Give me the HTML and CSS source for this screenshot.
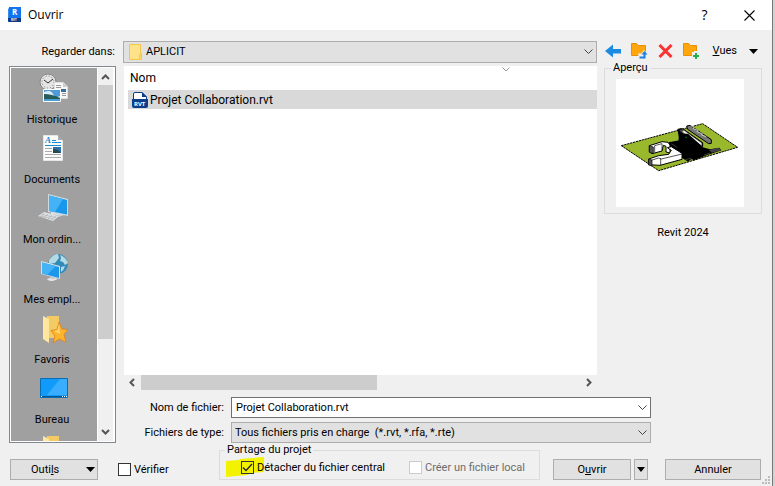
FILE: index.html
```html
<!DOCTYPE html>
<html lang="fr">
<head>
    <meta charset="UTF-8">
    <meta name="viewport" content="width=device-width, initial-scale=1.0">
    <title>Ouvrir</title>
    <link rel="stylesheet" href="styles.css">
</head>
<body>
    <div class="dialog">
        <header class="title-bar">
            <svg class="app-icon" width="16" height="16" viewBox="0 0 16 16">
                <path d="M1 2l2-2v14l-2 1z" fill="#3d8be8"/>
                <path d="M2 0h12v11H2z" fill="#1273f0"/>
                <path d="M1 11h13v4H2q-1 0-1-1z" fill="#0b3a86"/>
                <text x="5" y="8" class="app-letter">R</text>
                <text x="4" y="14" class="app-tag">RVT</text>
            </svg>
            <h1>Ouvrir</h1>
            <button class="title-button help" aria-label="Aide">?</button>
            <button class="title-button" aria-label="Fermer">
                <svg width="11" height="11" viewBox="0 0 11 11"><path d="M.5.5l10 10M10.500.5l-10 10" fill="none" stroke="#000" stroke-width="1.100"/></svg>
            </button>
        </header>

        <div class="look-in">
            <label for="folder">Regarder dans:</label>
            <div class="combo folder-combo">
                <svg class="combo-icon" width="14" height="16" viewBox="0 0 14 16">
                    <path d="M.5.5h11v9h1v6H.5z" fill="#ffe28a" stroke="#f2c744"/>
                    <path d="M10.500 15.500v-5h2v5" fill="#ffd968" stroke="#f2c744"/>
                </svg>
                <select id="folder"><option>APLICIT</option></select>
                <svg class="chevron" width="9" height="6" viewBox="0 0 9 6"><path d="M.5.5l4 4 4-4"/></svg>
            </div>
            <div class="toolbar">
                <button aria-label="Retour">
                    <svg width="16" height="14" viewBox="0 0 16 14"><path d="M0 7l8-6.500V5h8v4.500H8v4z" fill="#1a8be0"/></svg>
                </button>
                <button aria-label="Dossier parent">
                    <svg width="17" height="16" viewBox="0 0 17 16">
                        <path d="M.5 12.500V.5h5l2 2h7v10z" fill="#ffa60d" stroke="#e99000"/>
                        <path d="M7 10.500h3.500L13 7l4 4.500V16H8z" fill="#efefef"/>
                        <path d="M8.500 14.500h5V10" fill="none" stroke="#1a80d8" stroke-width="2"/>
                        <path d="M10.500 11.500l3-3.500 3 3.500z" fill="#1a80d8"/>
                    </svg>
                </button>
                <button aria-label="Supprimer">
                    <svg width="15" height="14" viewBox="0 0 15 14"><path d="M1.500 1l12 12M13.500 1l-12 12" fill="none" stroke="#fa3232" stroke-width="3"/></svg>
                </button>
                <button aria-label="Nouveau dossier">
                    <svg width="17" height="16" viewBox="0 0 17 16">
                        <path d="M.5 12.500V.5h5l2 2h6v10z" fill="#ffa60d" stroke="#e99000"/>
                        <path d="M9 9h2V8h5v8h-5v-1H9z" fill="#efefef"/>
                        <path d="M10 13h6M13 10v6" stroke="#22b14c" stroke-width="2"/>
                    </svg>
                </button>
                <button class="views"><span><u>V</u>ues</span>
                    <svg width="9" height="5" viewBox="0 0 9 5"><path d="M0 0h9L4.500 5z"/></svg>
                </button>
            </div>
        </div>

        <main class="browser">
            <nav class="places">
                <ul class="place-list">
                    <li>
                        <svg width="32" height="32" viewBox="0 0 32 32">
                            <circle cx="12" cy="10" r="8" fill="#e4e4e4" stroke="#858585"/>
                            <circle cx="12" cy="10" r="6" fill="none" stroke="#777" stroke-dasharray="1 2.140"/>
                            <path d="M8 8l4 3 5-4" fill="none" stroke="#333"/>
                            <path d="M18.500 10.500h9l4 4v12h-13z" fill="#f8f8f8" stroke="#ddd"/>
                            <path d="M27 10v5h5" fill="#ccc"/>
                            <path d="M20 13.500h5M20 15.500h5M20 18.500h4M26 21.500h4M26 23.500h4" stroke="#999"/>
                            <path d="M25 17h5v3h-5z" fill="#356da0"/>
                            <path d="M7.500 17.500h17v12h-17z" fill="#4f9bd8" stroke="#fff"/>
                            <path d="M8 20q7-3 9 2t7 2v2H8z" fill="#d9eefa"/>
                            <path d="M8 22q8 0 16 4v3H8z" fill="#285c58"/>
                            <path d="M8 27h16v2H8z" fill="#489fd0"/>
                        </svg>
                        <span>Historique</span>
                    </li>
                    <li>
                        <svg width="32" height="32" viewBox="0 0 32 32">
                            <path d="M7.500 3.500h14l5 5v20h-19z" fill="#fcfcfc" stroke="#e6e6e6"/>
                            <path d="M22 3v5h5z" fill="#aaa"/>
                            <text x="9" y="11" class="doc-letter">A</text>
                            <path d="M16 8.500h4M16 10.500h9M9 13.500h16" stroke="#188bd2"/>
                            <path d="M9 16.500h7M9 19.500h7M9 22.500h16M9 25.500h16" stroke="#aaa"/>
                            <path d="M17 15h8v6h-8z" fill="#2872ac"/>
                            <path d="M17 17q5 0 8 4h-8z" fill="#284950"/>
                        </svg>
                        <span>Documents</span>
                    </li>
                    <li>
                        <svg width="32" height="32" viewBox="0 0 32 32">
                            <path d="M15 20l8-1 5 2v2l-9 2-4-2z" fill="#e3e5e6"/>
                            <path d="M12 2l20 5v17l-20-4z" fill="#cfdbe0"/>
                            <path d="M13 3.500l18 4.500v14.500L13 19z" fill="#1997eb"/>
                            <path d="M13 3.500l14 3.500-8 13-6-1z" fill="#43b2f7"/>
                            <path d="M2 24l6-4 15 4-6 5z" fill="#dfe2e4"/>
                            <path d="M4 24l14 3M6 22.500l14 3M8 21l-3 4M12 22l-4 4M16 23l-4 4M20 24l-5 4" stroke="#9da3a6" stroke-width=".5"/>
                            <path d="M16 22l11 1-4 2z" fill="#c7cfd3"/>
                        </svg>
                        <span>Mon ordin...</span>
                    </li>
                    <li>
                        <svg width="32" height="32" viewBox="0 0 32 32">
                            <circle cx="22" cy="12" r="10" fill="#348ab7"/>
                            <path d="M13 8q4-6 9-6l1 4-4 5-6 1zM24 3q6 2 8 8l-3 2-2-3-3-1 1-3zM25 15l4-1q-1 4-4 6z" fill="#b4dae4"/>
                            <path d="M11 27l5-2 6 2-5 2q-5 0-6-2z" fill="#e1e3e4"/>
                            <path d="M15 22h3v5h-3z" fill="#c4c9cc"/>
                            <path d="M5 9l19 5v13L5 22z" fill="#d4dee3"/>
                            <path d="M6 10.500l17 4.500v11L6 21.500z" fill="#1b96ea"/>
                            <path d="M6 10.500L20 14l-9 9-5-1.500z" fill="#43b2f7"/>
                        </svg>
                        <span>Mes empl...</span>
                    </li>
                    <li>
                        <svg width="32" height="32" viewBox="0 0 32 32">
                            <path d="M11 4h12v22H11z" fill="#f2cc63"/>
                            <path d="M7 4l6 3v24l-6-4z" fill="#ffe7a0"/>
                            <path d="M23 10l3 7 6 .5-4 5 2 8-6.500-3.500L17 31l2-7-4-5.500 6-1z" fill="#fbb52e" stroke="#e77b1a" stroke-width=".8"/>
                            <path d="M23 12l1 10-6-3 3.500-1z" fill="#ffd66b"/>
                        </svg>
                        <span>Favoris</span>
                    </li>
                    <li>
                        <svg width="32" height="32" viewBox="0 0 32 32">
                            <path d="M4.500 6.500h27v19h-27z" fill="#109bfb" stroke="#086db2"/>
                            <path d="M24 7h7v16H11z" fill="#39adff"/>
                            <path d="M5 24h26v1H5z" fill="#07568e"/>
                            <path d="M5 24.500h1M26 24.500h1M28 24.500h1M30 24.500h1" stroke="#fff"/>
                        </svg>
                        <span>Bureau</span>
                    </li>
                    <li>
                        <svg width="32" height="32" viewBox="0 0 32 32">
                            <path d="M11 4h12v22H11z" fill="#f2cc63"/>
                            <path d="M7 4l6 3v24l-6-4z" fill="#ffe7a0"/>
                        </svg>
                    </li>
                </ul>
                <div class="scroll-v">
                    <svg width="9" height="6" viewBox="0 0 9 6"><path d="M1 5l3.500-3.500L8 5"/></svg>
                    <div class="thumb"></div>
                    <svg width="9" height="6" viewBox="0 0 9 6"><path d="M1 1l3.500 3.500L8 1"/></svg>
                </div>
            </nav>

            <div class="content">
                <div class="panes">
                    <div class="files">
                        <div class="file-pane">
                            <svg class="sort-mark" width="8" height="5" viewBox="0 0 8 5"><path d="M.5.5L4 4 7.500.5" fill="none" stroke="#999"/></svg>
                            <table class="file-table">
                                <thead>
                                    <tr><th>Nom</th></tr>
                                </thead>
                                <tbody>
                                    <tr>
                                        <td>
                                            <div class="file">
                                                <svg width="16" height="16" viewBox="0 0 16 16">
                                                    <path d="M1.500 8V2q0-1.500 1.500-1.500h7L14.500 5v4" fill="#fff" stroke="#0d3e8c"/>
                                                    <path d="M10 0v5h5z" fill="#0d3e8c"/>
                                                    <path d="M0 7h16v7q0 2-2 2H2q-2 0-2-2z" fill="#0d3e8c"/>
                                                    <text x="2" y="14" class="file-tag">RVT</text>
                                                </svg>
                                                <span>Projet Collaboration.rvt</span>
                                            </div>
                                        </td>
                                    </tr>
                                </tbody>
                            </table>
                        </div>
                        <div class="scroll-h">
                            <svg width="6" height="9" viewBox="0 0 6 9"><path d="M5 1L1.500 4.500 5 8"/></svg>
                            <div class="thumb"></div>
                            <svg width="6" height="9" viewBox="0 0 6 9"><path d="M1 1l3.500 3.500L1 8"/></svg>
                        </div>
                    </div>

                    <aside class="preview">
                        <fieldset class="group">
                            <legend>Aperçu</legend>
                            <svg class="thumbnail" viewBox="48 -78 384 384" role="img" aria-label="Aperçu du projet">
                                <path d="M64 122L308 56l105 71-237 70z" fill="#9ab82c" stroke="#000" stroke-width="3" stroke-dasharray="7 2"/>
                                <path d="M206 112l32-6-6-34 12-3 6 14 52 30 6 14 22 6 28-5 6 8-42 14-40 16-8-4-10 8-22-14-44-32z" fill="#000"/>
                                <path d="M326 135l30-7 8 8-28 7z" fill="#444"/>
                                <path d="M236 74l12-3 60 42v11l-8-2-58-40z" fill="#555" stroke="#000" stroke-width="3"/>
                                <path d="M244 77l8-2 54 39v10l-54-38z" fill="#eee" stroke="#000" stroke-width="2"/>
                                <path d="M238 86l26 0 38 34 4 18-24 20-50-26z" fill="#000"/>
                                <path d="M260 63l10-2 64 43v11l-8 1-63-43z" fill="#777" stroke="#000" stroke-width="3"/>
                                <path d="M272 62l10 5-2 4 14 5-3 4 16 6-2 4 14 5" fill="none" stroke="#fff" stroke-width="2"/>
                                <path d="M148 122l38-12 18 2 6 8v24l-12-3v-17l-8-3-4 17-30 8-8-6z" fill="#fff" stroke="#000" stroke-width="3"/>
                                <path d="M148 122l12 4v20l-12-4z" fill="#555" stroke="#000" stroke-width="2"/>
                                <path d="M164 122l22-6v20M164 122v20" fill="none" stroke="#000" stroke-width="2"/>
                                <path d="M146 162l30-10 30-4 8-12-12-8 12-3 32 20v18l-66 18-34-2z" fill="#fff" stroke="#000" stroke-width="3"/>
                                <path d="M146 162l10 3v17l-10-2z" fill="#555" stroke="#000" stroke-width="2"/>
                                <path d="M182 160v20M156 165l20-6 8 3 62-15" fill="none" stroke="#000" stroke-width="2"/>
                                <path d="M214 116l18 12M256 164l18-5M312 150l18-6" stroke="#555" stroke-width="2"/>
                                <path d="M256 97h5" stroke="#087b18" stroke-width="3"/>
                            </svg>
                        </fieldset>
                        <p>Revit 2024</p>
                    </aside>
                </div>

                <div class="fields">
                    <label for="fileName">Nom de fichier:</label>
                    <div class="combo">
                        <input type="text" id="fileName" value="Projet Collaboration.rvt">
                        <svg class="chevron" width="9" height="6" viewBox="0 0 9 6"><path d="M.5.5l4 4 4-4"/></svg>
                    </div>
                    <label for="fileType">Fichiers de type:</label>
                    <div class="combo">
                        <select id="fileType"><option>Tous fichiers pris en charge &nbsp;(*.rvt, *.rfa, *.rte)</option></select>
                        <svg class="chevron" width="9" height="6" viewBox="0 0 9 6"><path d="M.5.5l4 4 4-4"/></svg>
                    </div>
                </div>
            </div>
        </main>

        <footer class="actions">
            <button class="button tools"><span>Outi<u>l</u>s</span>
                <svg width="9" height="5" viewBox="0 0 9 5"><path d="M0 0h9L4.500 5z"/></svg>
            </button>
            <label class="check"><input type="checkbox">Vérifier</label>
            <fieldset class="group sharing">
                <legend>Partage du projet</legend>
                <label class="check detach">
                    <svg class="marker" width="40" height="20" viewBox="0 0 40 20"><path d="M1 4l13-1 1-1 24-2v15l-13 1-4 2-21 2z" fill="#f3f300"/></svg>
                    <input type="checkbox" checked>
                    <svg class="tick" width="13" height="13" viewBox="0 0 13 13"><path d="M2 6.500l3 3L11 3" fill="none" stroke="#222" stroke-width="1.300"/></svg>
                    <span>Détacher du fichier central</span>
                </label>
                <label class="check disabled"><input type="checkbox" disabled>Créer un fichier local</label>
            </fieldset>
            <button class="button open"><span>O<u>u</u>vrir</span></button>
            <button class="button open-more" aria-label="Options d'ouverture">
                <svg width="8" height="5" viewBox="0 0 8 5"><path d="M0 0h8L4 5z"/></svg>
            </button>
            <button class="button cancel">Annuler</button>
        </footer>
        <svg class="grip" width="9" height="9" viewBox="0 0 9 9"><path d="M6 0h2v2H6zM3 3h2v2H3zM6 3h2v2H6zM0 6h2v2H0zM3 6h2v2H3zM6 6h2v2H6z" fill="#bbb"/></svg>
    </div>
</body>
</html>
```
FILE: styles.css
```css
/* Main Styling */
* {
    margin: 0;
    padding: 0;
    box-sizing: border-box;
}

body {
    background: #d2d2d2;
    padding-right: 2px;
    font-family: Roboto, 'Open Sans', sans-serif;
    font-size: 11px;
    line-height: 14px;
    color: #000;
}

svg {
    display: block;
    flex: none;
}

button,
input,
select {
    font: inherit;
    color: inherit;
}

button {
    border: none;
    background: none;
}

.dialog {
    position: relative;
    display: flex;
    flex-direction: column;
    min-height: 100vh;
    background: #f0f0f0;
    border-right: 1px solid #777;
    border-bottom: 1px solid #777;
}

/* Title bar */
.title-bar {
    display: flex;
    align-items: center;
    height: 30px;
    padding-left: 7px;
    background: #fff;
    font-family: 'Open Sans', sans-serif;
}

.title-bar h1 {
    flex: 1;
    margin-left: 5px;
    font-size: 12px;
    font-weight: normal;
}

.app-letter {
    font: bold 8px 'Open Sans', sans-serif;
    fill: #fff;
}

.app-tag {
    font: bold 3px 'Open Sans', sans-serif;
    fill: #fff;
}

.title-button {
    display: flex;
    align-items: center;
    justify-content: center;
    width: 45px;
    height: 30px;
}

.title-button.help {
    font-size: 14px;
}

/* Folder row */
.look-in {
    display: flex;
    align-items: center;
    padding: 11px 10px 3px 9px;
}

.look-in > label {
    width: 114px;
    padding-right: 8px;
    text-align: right;
}

.combo {
    position: relative;
    flex: 1;
}

.combo select,
.combo input {
    display: block;
    width: 100%;
    height: 21px;
    padding: 0 20px 0 4px;
    border: 1px solid #adadad;
    border-radius: 0;
    background: #e1e1e1;
    appearance: none;
}

.combo select {
    padding-left: 3px;
}

.combo input {
    background: #fff;
    border-color: #707070;
}

.combo.folder-combo select {
    height: 22px;
    padding-left: 22px;
}

.combo-icon {
    position: absolute;
    left: 6px;
    top: 3px;
}

.chevron {
    position: absolute;
    right: 4px;
    top: 8px;
    pointer-events: none;
}

.chevron path {
    fill: none;
    stroke: #444;
}

.toolbar {
    display: flex;
    align-items: center;
    gap: 10px;
    width: 165px;
    padding: 0 4px 2px 8px;
}

.views {
    display: flex;
    align-items: center;
    gap: 12px;
    margin-left: auto;
}

/* Places */
.browser {
    display: flex;
    flex: 1;
    gap: 8px;
    padding: 0 10px 0 9px;
}

.places {
    display: flex;
    width: 107px;
    height: 377px;
    padding: 1px;
    border: 1px solid #828790;
    background: #fff;
}

.place-list {
    flex: 1;
    padding-right: 4px;
    overflow: hidden;
    list-style: none;
    background: #a0a0a0;
}

.place-list li {
    display: flex;
    flex-direction: column;
    align-items: center;
    gap: 9px;
    height: 60px;
    padding-top: 4px;
}

.doc-letter {
    font: italic bold 9px 'Liberation Serif', serif;
    fill: #188bd2;
}

.scroll-v {
    display: flex;
    flex-direction: column;
    align-items: center;
    width: 15px;
    margin: 0 1px;
    padding: 6px 0;
    background: #f0f0f0;
}

.scroll-v .thumb {
    width: 100%;
    height: 254px;
    margin: 5px 0 auto;
}

.thumb {
    background: #cdcdcd;
}

.scroll-v path,
.scroll-h path {
    fill: none;
    stroke: #555;
    stroke-width: 2;
}

/* Files and preview */
.content {
    flex: 1;
    display: flex;
    flex-direction: column;
}

.panes {
    display: flex;
    flex: 1;
    gap: 7px;
}

.files {
    display: flex;
    flex-direction: column;
    flex: 1;
}

.file-pane {
    position: relative;
    flex: 1;
    padding-left: 4px;
    background: #fff;
}

.sort-mark {
    position: absolute;
    left: 80%;
    top: 1px;
}

.file-table {
    width: 100%;
    border-collapse: collapse;
    font-size: 12px;
}

.file-table th {
    height: 24px;
    padding-left: 2px;
    font-weight: normal;
    text-align: left;
}

.file-table td {
    height: 19px;
    padding-left: 4px;
    background: #d9d9d9;
}

.file {
    display: flex;
    align-items: center;
    gap: 2px;
}

.file-tag {
    font: bold 6px 'Open Sans', sans-serif;
    fill: #fff;
}

.scroll-h {
    display: flex;
    align-items: center;
    height: 15px;
    padding: 0 5px;
}

.scroll-h .thumb {
    width: 51%;
    height: 15px;
    margin: 0 auto 0 6px;
}

.group {
    min-width: 0;
    border: 1px solid #dcdcdc;
}

.group legend {
    padding: 0 2px;
}

.preview {
    width: 158px;
    margin-top: -5px;
}

.preview .group {
    padding: 4px 17px 6px 11px;
}

.preview legend {
    margin-left: -5px;
}

.thumbnail {
    width: 100%;
    background: #fff;
}

.preview p {
    margin-top: 12px;
    text-align: center;
}

/* File name and type */
.fields {
    display: grid;
    grid-template-columns: 100px 1fr;
    align-items: center;
    gap: 4px 7px;
    padding: 7px 111px 0 0;
}

.fields label {
    text-align: right;
}

/* Bottom row */
.actions {
    display: flex;
    align-items: flex-end;
    padding: 0 11px 6px 10px;
}

.button {
    display: flex;
    align-items: center;
    justify-content: center;
    height: 21px;
    border: 1px solid #adadad;
    background: #e1e1e1;
}

.tools {
    justify-content: space-between;
    width: 88px;
    margin-right: 20px;
    padding: 0 2px 0 20px;
}

.check {
    position: relative;
    display: flex;
    align-items: center;
    gap: 3px;
    height: 21px;
}

.check input {
    width: 13px;
    height: 13px;
    border: 1px solid #333;
    background: #fff;
    appearance: none;
}

.sharing {
    display: flex;
    justify-content: space-between;
    width: 321px;
    height: 37px;
    margin: 0 13px 0 auto;
    padding: 0 14px 0 21px;
}

.sharing legend {
    margin-left: -16px;
}

.detach input,
.detach span {
    position: relative;
    background: none;
}

.marker {
    position: absolute;
    left: -16px;
    top: 0;
}

.tick {
    position: absolute;
    left: 0;
    top: 4px;
}

.disabled {
    color: #6d6d6d;
}

.disabled input {
    border-color: #ccc;
}

.open {
    width: 78px;
    margin-right: 3px;
}

.open-more {
    width: 14px;
    margin-right: 17px;
}

.cancel {
    width: 96px;
}

.grip {
    position: absolute;
    right: 1px;
    bottom: 1px;
}
```
